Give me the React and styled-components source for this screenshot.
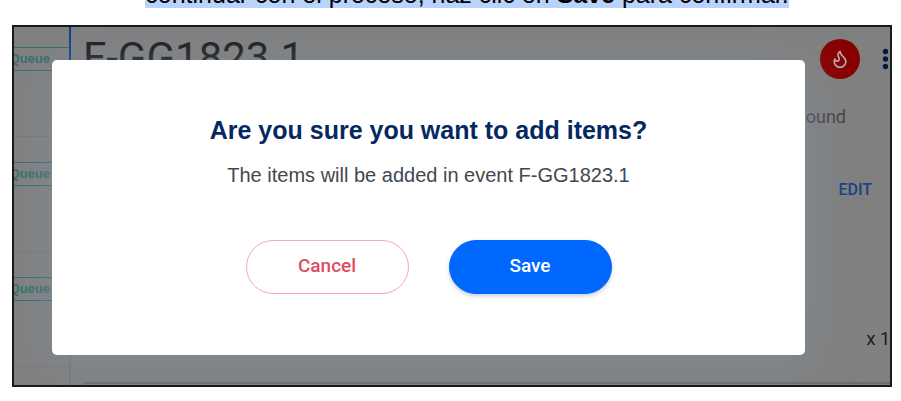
import React from "react";
import styled, { createGlobalStyle, css } from "styled-components";
import { Flame } from "lucide-react";

const GlobalStyle = createGlobalStyle`
  * { box-sizing: border-box; }
  body {
    margin: 0;
    overflow: hidden;
    background: #fff;
    font-family: "Liberation Sans", Arial, sans-serif;
  }
  h1, h2, p { margin: 0; }
  button { font: inherit; cursor: pointer; }
`;

const Page = styled.main`
  display: flex;
  flex-direction: column;
  gap: 17px;
`;

const Instruction = styled.p`
  margin-top: -20px;
  text-align: center;
  font-size: 25px;
  line-height: 28px;
  white-space: nowrap;
  color: #000;
  padding-left: 33px;
`;

const Highlight = styled.span`
  display: inline-block;
  background: #bad3fc;
`;

const Frame = styled.section`
  position: relative;
  display: grid;
  grid-template-columns: 57px 1fr;
  margin: 0 9px 0 12px;
  border: 2px solid #1a1a1a;
  background: #808080;
  overflow: hidden;
`;

const Queue = styled.ul`
  margin: 0;
  padding: 0;
  list-style: none;
`;

const QueueItem = styled.li`
  display: flex;
  justify-content: flex-end;
  align-items: flex-start;
  height: 115px;
  padding-top: 25px;
  border-right: 2px solid #77787c;
  border-bottom: 1px solid #77787c;

  &:first-child {
    height: 110px;
    padding-top: 20px;
  }

  &:last-child {
    height: 18px;
    padding: 0;
    border-bottom: 0;
  }

  ${(p) => p.$selected && css`border-right-color: #0b409a;`}
`;

const Tag = styled.span`
  flex: none;
  padding: 0 19px 0 8px;
  border: 1px solid #31706e;
  border-right: 0;
  color: #31706e;
  font-size: 13px;
  font-weight: 700;
  line-height: 22px;
`;

const Detail = styled.div`
  display: flex;
  flex-direction: column;
  min-width: 0;
`;

const DetailHeader = styled.header`
  display: flex;
  justify-content: space-between;
  height: 56px;
  padding: 8px 1px 0 12px;
`;

const EventTitle = styled.h1`
  color: #1b1b1d;
  font-family: Roboto, sans-serif;
  font-size: 42px;
  font-weight: 400;
  line-height: 46px;
`;

const Actions = styled.div`
  display: flex;
  align-items: center;
  gap: 22px;
  height: 48px;
`;

const IconButton = styled.button`
  display: grid;
  place-items: center;
  padding: 0;
  border: 0;
  background: none;
`;

const FireButton = styled(IconButton)`
  width: 40px;
  height: 40px;
  border-radius: 50%;
  background: #880000;
  color: #b9a9a9;
`;

const Location = styled.p`
  margin-top: 22px;
  padding-right: 44px;
  text-align: right;
  color: #454545;
  font-family: Roboto, sans-serif;
  font-size: 18px;
  line-height: 24px;
`;

const EditButton = styled.button`
  align-self: flex-end;
  margin: 49px 18px 0 0;
  padding: 0;
  border: 0;
  background: none;
  color: #184384;
  font-family: Roboto, sans-serif;
  font-size: 16px;
  font-weight: 500;
  line-height: 24px;
`;

const Quantity = styled.p`
  margin-top: 125px;
  text-align: right;
  color: #1c1c1e;
  font-family: Roboto, sans-serif;
  font-size: 18px;
  line-height: 24px;
`;

const Panel = styled.div`
  height: 3px;
  margin: 31px 0 0 12px;
  border-top: 2px solid #6c6c6e;
  border-radius: 4px 0 0 0;
`;

const Dialog = styled.div`
  position: absolute;
  inset: 33px 85px 30px 38px;
  display: flex;
  flex-direction: column;
  align-items: center;
  padding-top: 53px;
  border-radius: 5px;
  background: #fff;
  box-shadow: 0 8px 50px rgba(132, 146, 162, 0.6);
  text-align: center;
`;

const DialogTitle = styled.h2`
  color: #062862;
  font-size: 25px;
  font-weight: 700;
  line-height: 34px;
`;

const DialogText = styled.p`
  margin-top: 14px;
  color: #3f4852;
  font-size: 20px;
  line-height: 28px;
`;

const DialogActions = styled.div`
  display: flex;
  gap: 40px;
  margin-top: 51px;
`;

const DialogButton = styled.button`
  width: 163px;
  height: 54px;
  padding: 0 0 4px;
  border: 1px solid #f3aab1;
  border-radius: 27px;
  background: #fff;
  color: #df4c5e;
  font-family: Roboto, sans-serif;
  font-size: 19px;
  font-weight: 500;

  ${(p) => p.$primary && css`
    border-color: #0068ff;
    background: #0068ff;
    color: #fff;
    box-shadow: 0 2px 4px rgba(40, 70, 110, 0.25);
  `}
`;

function Kebab() {
  return (
    <svg width="7" height="22" viewBox="0 0 7 22" fill="#001a40" aria-hidden="true">
      <circle cx="3.5" cy="3.5" r="2.7" />
      <circle cx="3.5" cy="11" r="2.7" />
      <circle cx="3.5" cy="18.5" r="2.7" />
    </svg>
  );
}

export default function App() {
  return (
    <>
      <GlobalStyle />
      <Page>
        <Instruction>
          <Highlight>
            continuar con el proceso, haz clic en <strong>Save</strong> para confirmar.
          </Highlight>
        </Instruction>
        <Frame>
          <Queue>
            <QueueItem $selected><Tag>Queue</Tag></QueueItem>
            <QueueItem><Tag>Queue</Tag></QueueItem>
            <QueueItem><Tag>Queue</Tag></QueueItem>
            <QueueItem />
          </Queue>
          <Detail>
            <DetailHeader>
              <EventTitle>F-GG1823.1</EventTitle>
              <Actions>
                <FireButton aria-label="Priority"><Flame size={20} strokeWidth={2} /></FireButton>
                <IconButton aria-label="More options"><Kebab /></IconButton>
              </Actions>
            </DetailHeader>
            <Location>ound</Location>
            <EditButton>EDIT</EditButton>
            <Quantity>x 1</Quantity>
            <Panel />
          </Detail>
          <Dialog role="dialog" aria-labelledby="dialog-title">
            <DialogTitle id="dialog-title">Are you sure you want to add items?</DialogTitle>
            <DialogText>The items will be added in event F-GG1823.1</DialogText>
            <DialogActions>
              <DialogButton>Cancel</DialogButton>
              <DialogButton $primary>Save</DialogButton>
            </DialogActions>
          </Dialog>
        </Frame>
      </Page>
    </>
  );
}
